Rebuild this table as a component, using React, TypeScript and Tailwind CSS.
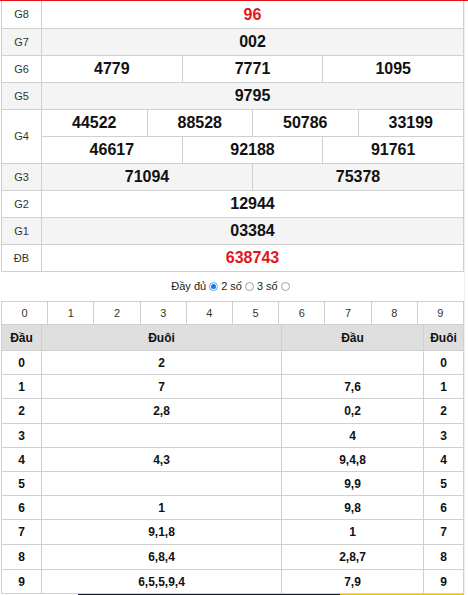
import React from 'react';

type Prize = { label: string; rows: string[][]; gray?: boolean; red?: boolean };

const PRIZES: Prize[] = [
  { label: 'G8', rows: [['96']], red: true },
  { label: 'G7', rows: [['002']], gray: true },
  { label: 'G6', rows: [['4779', '7771', '1095']] },
  { label: 'G5', rows: [['9795']], gray: true },
  { label: 'G4', rows: [['44522', '88528', '50786', '33199'], ['46617', '92188', '91761']] },
  { label: 'G3', rows: [['71094', '75378']], gray: true },
  { label: 'G2', rows: [['12944']] },
  { label: 'G1', rows: [['03384']], gray: true },
  { label: 'ĐB', rows: [['638743']], red: true },
];

const LOTO = [
  { d: '0', left: '2', right: '' },
  { d: '1', left: '7', right: '7,6' },
  { d: '2', left: '2,8', right: '0,2' },
  { d: '3', left: '', right: '4' },
  { d: '4', left: '4,3', right: '9,4,8' },
  { d: '5', left: '', right: '9,9' },
  { d: '6', left: '1', right: '9,8' },
  { d: '7', left: '9,1,8', right: '1' },
  { d: '8', left: '6,8,4', right: '2,8,7' },
  { d: '9', left: '6,5,5,9,4', right: '7,9' },
];

function PrizeRow({ prize, first }: { prize: Prize; first: boolean }) {
  const bg = prize.gray ? 'bg-[#f4f4f4]' : 'bg-white';
  const color = prize.red ? 'text-[#e5141b]' : 'text-[#111]';
  return (
    <div className={`flex border-b border-[#d0d0d0] ${bg}`}>
      <div className="w-[40px] shrink-0 flex items-center justify-center border-r border-[#d0d0d0] text-[11px] text-[#333]">
        {prize.label}
      </div>
      <div className="flex-1 flex flex-col">
        {prize.rows.map((row, i) => (
          <div
            key={i}
            className={`flex ${first ? 'h-[27px]' : 'h-[26px]'} ${i < prize.rows.length - 1 ? 'border-b border-[#d0d0d0] h-[27px]' : ''}`}
          >
            {row.map((n) => (
              <div
                key={n}
                className={`flex-1 flex items-center justify-center border-r border-[#d0d0d0] text-[16px] font-bold ${color}`}
              >
                {n}
              </div>
            ))}
          </div>
        ))}
      </div>
    </div>
  );
}

function Radio({ checked }: { checked?: boolean }) {
  if (checked) {
    return (
      <span className="inline-flex w-[9px] h-[9px] rounded-full border border-[#5aa2f0] bg-white items-center justify-center mx-[3px]">
        <span className="w-[5px] h-[5px] rounded-full bg-[#1a73e8]" />
      </span>
    );
  }
  return <span className="inline-block w-[9px] h-[9px] rounded-full border border-[#a0a0a0] bg-white mx-[3px]" />;
}

export default function App() {
  return (
    <div className="w-[468px] h-[595px] bg-white border-t border-[#e5141b] font-['Liberation_Sans',Arial,sans-serif] overflow-hidden">
      <div className="w-[465px] border-r border-[#eee]">
        {/* bảng giải */}
        <div className="ml-px w-[463px] border-l border-[#d0d0d0]">
          {PRIZES.map((p, i) => (
            <PrizeRow key={p.label} prize={p} first={i === 0} />
          ))}
        </div>

        <div className="h-[29px] flex items-center justify-center text-[11px] text-[#222]">
          <span>Đầy đủ</span>
          <Radio checked />
          <span>2 số</span>
          <Radio />
          <span>3 số</span>
          <Radio />
        </div>

        {/* bảng loto */}
        <div className="ml-px w-[463px] border-l border-t border-[#d0d0d0]">
          <div className="flex h-[23px] border-b border-[#d0d0d0]">
            {['0', '1', '2', '3', '4', '5', '6', '7', '8', '9'].map((n) => (
              <div key={n} className="flex-1 flex items-center justify-center border-r border-[#d0d0d0] text-[11px] text-[#333]">
                {n}
              </div>
            ))}
          </div>
          <div className="flex h-[26px] border-b border-[#d0d0d0] bg-[#dedede] text-[12px] font-bold text-[#111]">
            <div className="w-[40px] shrink-0 flex items-center justify-center border-r border-[#d0d0d0]">Đầu</div>
            <div className="w-[240px] shrink-0 flex items-center justify-center border-r border-[#d0d0d0]">Đuôi</div>
            <div className="w-[142px] shrink-0 flex items-center justify-center border-r border-[#d0d0d0]">Đầu</div>
            <div className="flex-1 flex items-center justify-center border-r border-[#d0d0d0]">Đuôi</div>
          </div>
          {LOTO.map((r, i) => (
            <div
              key={r.d}
              className={`flex border-b border-[#d0d0d0] text-[12px] font-bold text-[#111] ${i === 2 || i === 7 || i === 8 ? 'h-[25px]' : 'h-[24px]'}`}
            >
              <div className="w-[40px] shrink-0 flex items-center justify-center border-r border-[#d0d0d0]">{r.d}</div>
              <div className="w-[240px] shrink-0 flex items-center justify-center border-r border-[#d0d0d0]">{r.left}</div>
              <div className="w-[142px] shrink-0 flex items-center justify-center border-r border-[#d0d0d0]">{r.right}</div>
              <div className="flex-1 flex items-center justify-center border-r border-[#d0d0d0]">{r.d}</div>
            </div>
          ))}
        </div>
      </div>
      <div className="flex h-[2px]">
        <div className="w-[78px]" />
        <div className="w-[262px] bg-[#16162c]" />
        <div className="w-[124px] bg-[#f8c200]" />
      </div>
    </div>
  );
}
